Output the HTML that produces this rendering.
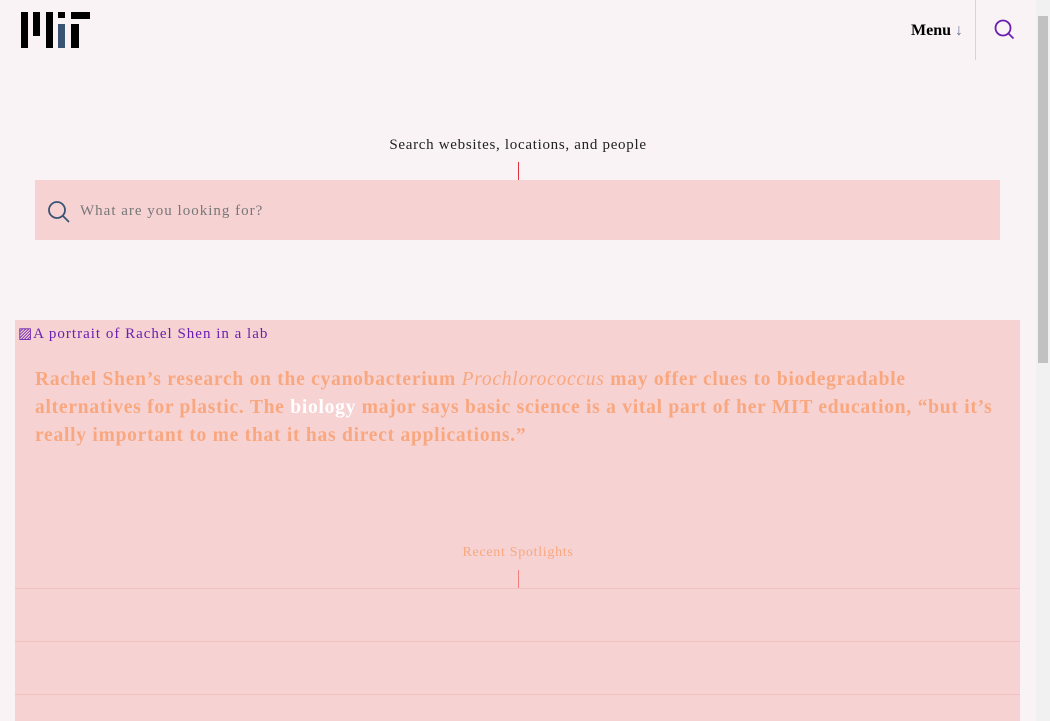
<!DOCTYPE html>
<html><head><meta charset="utf-8"><style>
body{margin:0;width:1050px;height:721px;overflow:hidden;background:#f9f3f5;font-family:"Liberation Serif",serif;position:relative}
.b{position:absolute;background:#000}
.sb{position:absolute;right:0;top:0;width:14px;height:721px;background:#f1f1f1}
</style></head><body>
<div class="b" style="left:21px;top:12px;width:7px;height:36px"></div>
<div class="b" style="left:33px;top:12px;width:7px;height:24px"></div>
<div class="b" style="left:46px;top:12px;width:7px;height:36px"></div>
<div class="b" style="left:58px;top:12px;width:7px;height:6px"></div>
<div class="b" style="left:58px;top:24px;width:7px;height:24px;background:#3b5473"></div>
<div class="b" style="left:71px;top:12px;width:19px;height:7px"></div>
<div class="b" style="left:71px;top:24px;width:8px;height:24px"></div>
<div style="position:absolute;left:911px;top:22px;font-size:16px;font-weight:bold">Menu <span style="color:#6a7aa0;font-weight:normal">↓</span></div>
<div style="position:absolute;left:975px;top:0;width:1px;height:60px;background:#f0c8cc"></div>
<svg style="position:absolute;left:994px;top:19px" width="22" height="22" viewBox="0 0 22 22"><circle cx="9" cy="9" r="7.5" fill="none" stroke="#6a1fb0" stroke-width="1.8"/><line x1="14.5" y1="14.5" x2="19.5" y2="19.5" stroke="#6a1fb0" stroke-width="1.8"/></svg>
<div style="position:absolute;left:0;width:1036px;top:137px;text-align:center;font-size:15px;letter-spacing:0.7px;color:#222">Search websites, locations, and people</div>
<div style="position:absolute;left:518px;top:162px;width:1px;height:18px;background:#e0303f"></div>
<div style="position:absolute;left:35px;top:180px;width:965px;height:60px;background:#f6d2d3"></div>
<svg style="position:absolute;left:47px;top:200px" width="24" height="24" viewBox="0 0 24 24"><circle cx="10" cy="10" r="8" fill="none" stroke="#3b5473" stroke-width="1.8"/><line x1="16" y1="16" x2="22" y2="22" stroke="#3b5473" stroke-width="1.8"/></svg>
<div style="position:absolute;left:80px;top:203px;font-size:15px;letter-spacing:1px;color:#777">What are you looking for?</div>
<div style="position:absolute;left:15px;top:320px;width:1005px;height:401px;background:#f6d2d3"></div>
<div style="position:absolute;left:18px;top:324px;font-size:15px;letter-spacing:1px;color:#6a1fb0">▨A portrait of Rachel Shen in a lab</div>
<div style="position:absolute;left:35px;top:366px;width:960px;font-size:19.5px;letter-spacing:0.75px;line-height:28px;color:#f9a77e;font-weight:bold">Rachel Shen’s research on the cyanobacterium <i style="font-weight:normal">Prochlorococcus</i> may offer clues to biodegradable alternatives for plastic. The <span style="color:#fff">biology</span> major says basic science is a vital part of her MIT education, “but it’s really important to me that it has direct applications.”</div>
<div style="position:absolute;left:0;width:1036px;top:545px;text-align:center;font-size:14px;letter-spacing:0.7px;color:#f9a77e">Recent Spotlights</div>
<div style="position:absolute;left:518px;top:570px;width:1px;height:18px;background:#f08080"></div>
<div style="position:absolute;left:15px;top:588px;width:1005px;height:1px;background:#f3c0c0"></div>
<div style="position:absolute;left:15px;top:641px;width:1005px;height:1px;background:#f3c0c0"></div>
<div style="position:absolute;left:15px;top:694px;width:1005px;height:1px;background:#f3c0c0"></div>
<div class="sb"><div style="position:absolute;left:2px;top:16px;width:10px;height:347px;background:#c1c1c1"></div></div>
</body></html>
